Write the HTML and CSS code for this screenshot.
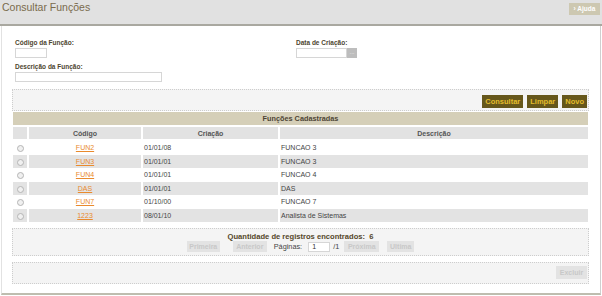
FILE: index.html
```html
<!DOCTYPE html>
<html lang="pt">
<head>
  <meta charset="UTF-8" />
  <title>Consultar Funções</title>
  <link rel="stylesheet" href="styles.css">
</head>
<body>
  <div class="titlebar">
    <h1>Consultar Funções</h1>
    <a class="help" href="#">&rsaquo; Ajuda</a>
  </div>

  <div class="panel">
    <div class="filters">
      <div class="col col-left">
        <label for="codigo">Código da Função:</label>
        <input type="text" id="codigo" class="in-code" />
        <label for="descricao" class="second">Descrição da Função:</label>
        <input type="text" id="descricao" class="in-desc" />
      </div>
      <div class="col">
        <label for="data">Data de Criação:</label>
        <div class="date">
          <input type="text" id="data" class="in-date" />
          <span class="cal">...</span>
        </div>
      </div>
    </div>

    <div class="box toolbar">
      <button class="btn">Consultar</button>
      <button class="btn">Limpar</button>
      <button class="btn">Novo</button>
    </div>

    <div class="grid-title">Funções Cadastradas</div>
    <table class="grid">
      <thead>
        <tr>
          <th class="c-sel"></th>
          <th class="c-code">Código</th>
          <th class="c-date">Criação</th>
          <th>Descrição</th>
        </tr>
      </thead>
      <tbody>
        <tr><td class="sel"><span class="radio"></span></td><td class="code"><a href="#">FUN2</a></td><td>01/01/08</td><td>FUNCAO 3</td></tr>
        <tr class="alt"><td class="sel"><span class="radio"></span></td><td class="code"><a href="#">FUN3</a></td><td>01/01/01</td><td>FUNCAO 3</td></tr>
        <tr><td class="sel"><span class="radio"></span></td><td class="code"><a href="#">FUN4</a></td><td>01/01/01</td><td>FUNCAO 4</td></tr>
        <tr class="alt"><td class="sel"><span class="radio"></span></td><td class="code"><a href="#">DAS</a></td><td>01/01/01</td><td>DAS</td></tr>
        <tr><td class="sel"><span class="radio"></span></td><td class="code"><a href="#">FUN7</a></td><td>01/10/00</td><td>FUNCAO 7</td></tr>
        <tr class="alt"><td class="sel"><span class="radio"></span></td><td class="code"><a href="#">1223</a></td><td>08/01/10</td><td>Analista de Sistemas</td></tr>
      </tbody>
    </table>

    <div class="box pager">
      <div class="count">Quantidade de registros encontrados: &nbsp;6</div>
      <div class="pages">
        <button class="btn-off w-first" disabled>Primeira</button>
        <button class="btn-off w-prev" disabled>Anterior</button>
        <span class="lbl">Páginas:</span>
        <input type="text" class="in-page" value="1" />
        <span class="total">/1</span>
        <button class="btn-off w-next" disabled>Próxima</button>
        <button class="btn-off w-last" disabled>Ultima</button>
      </div>
    </div>

    <div class="box actions">
      <button class="btn-off w-del" disabled>Excluir</button>
    </div>
  </div>
</body>
</html>
```

FILE: styles.css
```css
body { margin: 0; background: #fff; font-family: "Liberation Sans", Arial, sans-serif; font-size: 7px; color: #444; }

.titlebar { display: flex; justify-content: space-between; height: 24px; background: #e1e1e1; border-bottom: 2px solid #a9a8a0; }
.titlebar h1 { margin: 1px 0 0 2px; font-size: 10.5px; font-weight: normal; line-height: 12px; color: #7a6b4c; }
.help { margin: 3px 2px 0 0; width: 31px; height: 12px; line-height: 12px; text-align: center; background: #cdc8b1; color: #fff; font-weight: bold; font-size: 6.5px; text-decoration: none; }

.panel { margin: 0 1px; height: 267px; padding: 0 11px 0 10px; border-left: 1px solid #e2e2e2; border-right: 1px solid #cfcfcf; border-bottom: 2px solid #bebdaf; }

.filters { display: flex; padding: 13px 0 7px 3px; }
.col { display: flex; flex-direction: column; align-items: flex-start; }
.col-left { width: 281px; }
label { font-size: 6.5px; font-weight: bold; line-height: 8px; margin-bottom: 1px; color: #4e4630; }
label.second { margin-top: 5px; }
input { box-sizing: border-box; height: 10px; margin: 0; padding: 0 3px; border: 1px solid #d6d6d6; background: #fff; font: 7px "Liberation Sans", Arial, sans-serif; color: #333; }
.in-code { width: 32px; }
.in-desc { width: 147px; }
.in-date { width: 51px; }
.date { display: flex; }
.cal { width: 10px; height: 10px; background: #bdbdbd; color: #eee; font-size: 6px; line-height: 8px; text-align: center; }

.box { border: 1px dotted #cdcdcd; background: #f4f4f4; }
.toolbar { display: flex; justify-content: flex-end; gap: 4px; height: 20px; padding: 5px 1px 0 0; box-sizing: border-box; height: 22px; }
.btn { height: 13px; padding: 0 3px; border: 0; background: #66571b; color: #e4bd2c; font: bold 7.5px "Liberation Sans", Arial, sans-serif; }

.grid-title { margin: 1px 1px 0; height: 13px; line-height: 13px; background: #d5cfb8; text-align: center; font-weight: bold; font-size: 7.3px; color: #4d4434; }

.grid { width: 579px; margin: 2px -1px 0; border-collapse: separate; border-spacing: 2px 0; table-layout: fixed; }
.grid th { height: 12px; padding: 0; background: #e2e2e2; border-bottom: 2px solid #fff; font-weight: bold; font-size: 7px; color: #555; text-align: center; }
.c-sel { width: 14px; }
.c-code { width: 112px; }
.c-date { width: 135px; }
.grid td { height: 13.5px; padding: 0 0 0 1px; white-space: nowrap; color: #444; }
.grid tr.alt td { background: #e3e3e3; }
.grid td.sel, .grid td.code { text-align: center; padding: 0; }
.code a { color: #e98a2d; text-decoration: underline; }
.radio { display: inline-block; width: 5px; height: 5px; margin-top: 2px; border: 1px solid #b5b5b5; border-radius: 50%; background: #f0f0f0; vertical-align: middle; }

.pager { margin-top: 6px; padding: 3px 0; text-align: center; }
.count { line-height: 9px; font-weight: bold; font-size: 7.6px; color: #54482a; }
.pages { display: flex; justify-content: center; align-items: center; height: 11px; }
.btn-off { height: 11px; padding: 0; border: 0; background: #e3e3e3; color: #c8c8c8; font: bold 7px "Liberation Sans", Arial, sans-serif; }
.w-first { width: 33px; margin-right: 13px; }
.w-prev { width: 34px; margin-right: 7px; }
.lbl { margin-right: 6px; font-size: 7.3px; color: #444; }
.in-page { width: 22px; margin-right: 3px; }
.total { margin-right: 5px; font-size: 7.3px; }
.w-next { width: 35px; margin-right: 8px; }
.w-last { width: 27px; }

.actions { display: flex; justify-content: flex-end; margin-top: 6px; padding: 3px 1px 4px 0; }
.w-del { width: 31px; height: 13px; }
```
